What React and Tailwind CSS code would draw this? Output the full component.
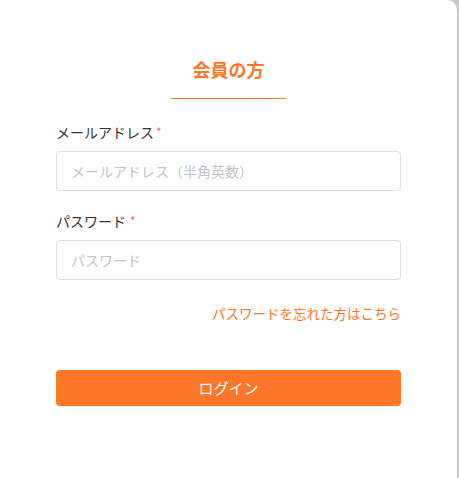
export default function App() {
  return (
    <div className="w-[459px] h-[478px] bg-[#c9c9c9]" style={{ fontFamily: '"Noto Sans CJK JP", "Noto Sans", sans-serif' }}>
      <div className="w-[457px] h-[478px] bg-white rounded-tr-[10px] flex flex-col items-center">
        <div className="mt-[56px] flex flex-col items-center">
          <h2 className="text-[18px] leading-[26px] font-bold text-[#ff7628]">会員の方</h2>
          <div className="mt-[16px] w-[115px] h-[1px] bg-[#ff7628]"></div>
        </div>
        <form className="w-[345px] mt-[23px] flex flex-col">
          <label className="text-[14px] leading-[20px] text-[#333]">
            メールアドレス<span className="text-[#f56c6c] text-[12px] ml-[2px] align-top">*</span>
          </label>
          <input
            className="mt-[9px] h-[40px] w-full border border-[#dcdfe6] rounded-[4px] px-[14px] text-[14px] outline-none placeholder:text-[#c0c4cc]"
            placeholder="メールアドレス（半角英数）"
          />
          <label className="mt-[20px] text-[14px] leading-[20px] text-[#333]">
            パスワード<span className="text-[#f56c6c] text-[12px] ml-[4px] align-top">*</span>
          </label>
          <input
            type="password"
            className="mt-[9px] h-[40px] w-full border border-[#dcdfe6] rounded-[4px] px-[14px] text-[14px] outline-none placeholder:text-[#c0c4cc]"
            placeholder="パスワード"
          />
          <div className="mt-[23px] flex justify-end">
            <a className="text-[13.5px] leading-[20px] text-[#ff7628] cursor-pointer">パスワードを忘れた方はこちら</a>
          </div>
          <button type="button" className="mt-[47px] h-[36px] w-full rounded-[4px] bg-[#ff7628] text-white text-[15px]">
            ログイン
          </button>
        </form>
      </div>
    </div>
  );
}
